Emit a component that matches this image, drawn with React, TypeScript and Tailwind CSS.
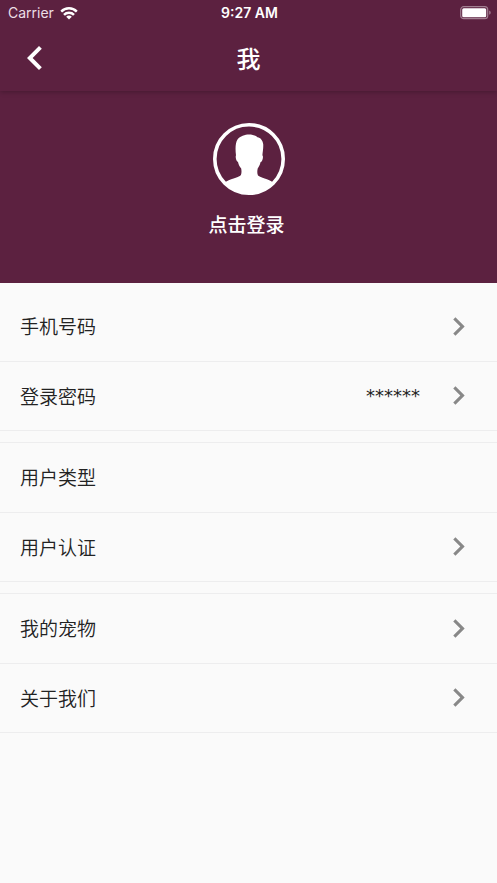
import React from "react";

type Item = { label: string; value?: string; arrow: boolean };

const groups: Item[][] = [
  [
    { label: "手机号码", arrow: true },
    { label: "登录密码", value: "******", arrow: true },
  ],
  [
    { label: "用户类型", arrow: false },
    { label: "用户认证", arrow: true },
  ],
  [
    { label: "我的宠物", arrow: true },
    { label: "关于我们", arrow: true },
  ],
];

function StatusBar() {
  return (
    <div className="grid h-[26px] grid-cols-3 items-center pr-1.5 pl-2 font-['Inter',sans-serif] text-sm text-white">
      <div className="flex items-center gap-1.5">
        <span className="text-[#ecdfe6]">Carrier</span>
        <svg viewBox="0 0 18 13" className="h-[13px] w-[18px]" fill="none" stroke="white" strokeWidth="2.5">
          <path d="M1.200 4.600a11 11 0 0 1 15.600 0" />
          <path d="M4 7.900a7 7 0 0 1 10 0" />
          <path d="M9 12.600 6.200 9.800a3.900 3.900 0 0 1 5.600 0z" fill="white" stroke="none" />
        </svg>
      </div>
      <span className="text-center text-sm font-semibold">9:27 AM</span>
      <svg viewBox="0 0 31 14" className="h-3.5 w-[31px] justify-self-end">
        <rect x="0.7" y="0.7" width="27" height="12" rx="3" fill="none" stroke="#a27f91" strokeWidth="1.2" />
        <rect x="2.2" y="2.2" width="24" height="9" rx="1.5" fill="white" />
        <path d="M29.200 4.600v4.200q1.500-.6 1.500-2.100t-1.500-2.100" fill="#a27f91" />
      </svg>
    </div>
  );
}

function Avatar() {
  return (
    <svg viewBox="0 0 72 72" className="size-[72px]">
      <circle cx="36" cy="36" r="34.2" fill="none" stroke="white" strokeWidth="3.6" />
      <path
        fill="white"
        d="M11 60C17 55.500 25 55 27.500 52.500C28.800 50.500 28.600 47.500 28.200 45.500C26.500 43.500 25.500 41.500 25 39C23.500 38.500 22.600 35.500 22.700 33.500C22.800 32.800 22.900 32.700 23 32.300C22.200 26 22.300 20 24.500 16.500C27 13 32 11.500 36 11.500C39.500 11.500 43 12.500 44.500 14.200C47.500 14.400 49.700 17.500 50.200 21C50.500 25 49.700 29 49.400 32.300C50.200 33 50 34.500 49.600 36.300C49.200 37.800 48.600 39 47.500 39.200C47 41.500 46 43.600 44.700 45.500C44.200 48 44 50.500 45 52.500C47.500 55 55 55.500 61 60A34.600 34.600 0 0 1 11 60Z"
      />
    </svg>
  );
}

function Row({ label, value, arrow }: Item) {
  return (
    <button type="button" className="flex w-full flex-1 items-center border-b border-[#ededee] px-5 text-left text-[19px] leading-7 font-[350] text-[#222222]">
      <span className="flex-1">{label}</span>
      {value && <span className="mr-5 font-['DejaVu_Sans',sans-serif] text-lg font-normal">{value}</span>}
      {arrow && (
        <svg viewBox="0 0 24 24" className="size-[37px]" fill="#888888">
          <path d="M10 6 8.590 7.410 13.170 12l-4.580 4.590L10 18l6-6z" />
        </svg>
      )}
    </button>
  );
}

export default function App() {
  return (
    <div className="min-h-screen bg-[#fafafa] font-['Noto_Sans_CJK_SC',sans-serif]">
      <header className="relative bg-[#5c2140] text-white shadow-[0_1px_5px_rgba(0,0,0,0.25)]">
        <StatusBar />
        <div className="grid h-[65px] grid-cols-[48px_1fr_48px] items-center px-[11px] pb-0.5">
          <button type="button" aria-label="返回">
            <svg viewBox="0 0 24 24" className="size-12" fill="white">
              <path d="M15.410 7.410 14 6l-6 6 6 6 1.410-1.410L10.830 12z" />
            </svg>
          </button>
          <h1 className="text-center text-2xl font-medium">我</h1>
        </div>
      </header>
      <section className="flex h-48 flex-col items-center bg-[#5c2140] pt-8 text-white">
        <Avatar />
        <button type="button" className="mt-[15px] pr-1 text-[19px] leading-7 font-medium">
          点击登录
        </button>
      </section>
      <main className="flex flex-col gap-[11px] pt-2">
        {groups.map((group, index) => (
          <div
            key={group[0].label}
            className={`flex h-[140px] flex-col border-t ${index === 0 ? "border-transparent" : "border-[#ededee]"}`}
          >
            {group.map((item) => (
              <Row key={item.label} {...item} />
            ))}
          </div>
        ))}
      </main>
    </div>
  );
}
